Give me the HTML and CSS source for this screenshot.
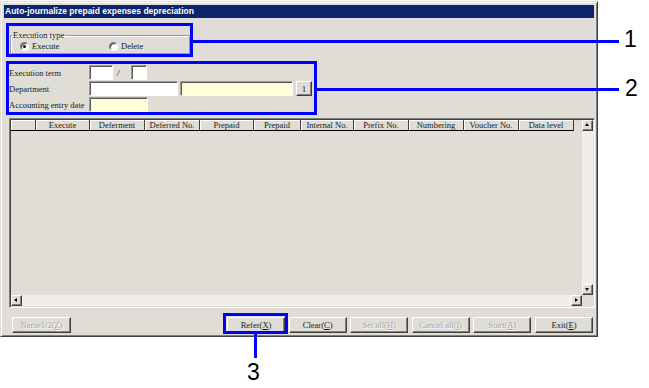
FILE: index.html
```html
<!DOCTYPE html>
<html>
<head>
    <meta charset="UTF-8">
    <title>Auto-journalize prepaid expenses depreciation</title>
    <link rel="stylesheet" href="styles.css">
</head>
<body>
    <div class="window">
        <div class="titlebar">Auto-journalize prepaid expenses depreciation</div>
        <div class="client">
            <fieldset class="group">
                <legend>Execution type</legend>
                <label class="opt"><span class="radio on"></span>Execute</label>
                <label class="opt"><span class="radio"></span>Delete</label>
            </fieldset>

            <div class="fields">
                <div class="row">
                    <span class="lbl">Execution term</span>
                    <span class="input w-year"></span>
                    <span class="slash">/</span>
                    <span class="input w-month"></span>
                </div>
                <div class="row">
                    <span class="lbl">Department</span>
                    <span class="input w-code"></span>
                    <span class="input yellow w-name"></span>
                    <button class="btn tiny">1</button>
                </div>
                <div class="row">
                    <span class="lbl">Accounting entry date</span>
                    <span class="input yellow w-date"></span>
                </div>
            </div>

            <div class="list">
                <div class="view">
                    <div class="head">
                        <span class="hc c0"></span>
                        <span class="hc c1">Execute</span>
                        <span class="hc c2">Deferment</span>
                        <span class="hc c2">Deferred No.</span>
                        <span class="hc c1">Prepaid</span>
                        <span class="hc c5">Prepaid</span>
                        <span class="hc c6">Internal No.</span>
                        <span class="hc c2">Prefix No.</span>
                        <span class="hc c2">Numbering</span>
                        <span class="hc c2">Voucher No.</span>
                        <span class="hc c2">Data level</span>
                    </div>
                </div>
                <div class="vscroll">
                    <span class="sbtn up"></span>
                    <span class="track"></span>
                    <span class="sbtn down"></span>
                </div>
                <div class="hscroll">
                    <span class="sbtn left"></span>
                    <span class="track"></span>
                    <span class="sbtn right"></span>
                </div>
                <div class="corner"></div>
            </div>

            <div class="buttons">
                <button class="btn off">Name1/2(<u>Z</u>)</button>
                <span class="spacer"></span>
                <button class="btn">Refer(<u>X</u>)</button>
                <button class="btn">Clear(<u>C</u>)</button>
                <button class="btn off">Set all(<u>H</u>)</button>
                <button class="btn off">Cancel all(<u>I</u>)</button>
                <button class="btn off">Start(<u>A</u>)</button>
                <button class="btn">Exit(<u>E</u>)</button>
            </div>
        </div>
    </div>

    <!-- callouts -->
    <div class="callouts">
        <div class="box b1"></div>
        <div class="line l1"></div>
        <span class="num n1">1</span>
        <div class="box b2"></div>
        <div class="line l2"></div>
        <span class="num n2">2</span>
        <div class="box b3"></div>
        <div class="line l3"></div>
        <span class="num n3">3</span>
    </div>
</body>
</html>
```

FILE: styles.css
```css
* { box-sizing: border-box; }
body {
    margin: 0;
    padding-top: 1px;
    background: #fff;
    font-family: "Liberation Serif", serif;
    font-size: 8.5px;
    color: #1a1a1a;
    position: relative;
    height: 388px;
}

/* window frame */
.window {
    width: 598px;
    background: #dfddd6;
    border: 1px solid;
    border-color: #dfddd6 #404040 #404040 #dfddd6;
    box-shadow: inset 1px 1px #fff, inset -1px -1px #808080;
    padding: 3px;
}
.titlebar {
    height: 13px;
    background: #0c246c;
    color: #fff;
    font: bold 8.5px/13px "Liberation Sans", sans-serif;
    padding-left: 1px;
    white-space: nowrap;
}

/* execution type */
.group {
    margin: 12px 0 0 6px;
    width: 180px;
    min-width: 0;
    padding: 1px 0 2px 9px;
    border: 1px solid #9c9a94;
    box-shadow: 1px 1px #fff, inset 1px 1px #fff;
    display: flex;
}
.group legend {
    padding: 0 1px;
    margin-left: -8px;
    line-height: 10px;
}
.opt {
    display: flex;
    align-items: center;
    gap: 3px;
    width: 89px;
    line-height: 10px;
}
.opt:last-child { width: auto; }
.radio {
    width: 9px; height: 9px;
    border-radius: 50%;
    background: #fff;
    border: 1px solid;
    border-color: #808080 #fff #fff #808080;
    box-shadow: inset 1px 1px #404040;
    position: relative;
}
.radio.on::after {
    content: "";
    position: absolute;
    left: 2px; top: 2px;
    width: 3px; height: 3px;
    border-radius: 50%;
    background: #000;
}

/* input rows */
.fields {
    margin: 11px 0 0 5px;
    display: flex;
    flex-direction: column;
    gap: 1px;
}
.row { display: flex; align-items: center; height: 15px; }
.lbl { width: 80px; white-space: nowrap; }
.input {
    height: 15px;
    background: #fff;
    border: 1px solid;
    border-color: #9c9a94 #fff #fff #9c9a94;
    box-shadow: inset 1px 1px #5a5a5a;
}
.yellow { background: #ffffd6; }
.w-year { width: 24px; }
.slash { width: 18px; padding-left: 4px; font-style: italic; }
.w-month { width: 16px; }
.w-code { width: 89px; margin-right: 2px; }
.w-name { width: 113px; margin-right: 3px; }
.w-date { width: 59px; }

/* list view */
.list {
    margin: 6px 0 0 5px;
    width: 586px;
    height: 190px;
    border: 1px solid;
    border-color: #808080 #fff #fff #808080;
    box-shadow: inset 1px 1px #404040, inset -1px -1px #dfddd6;
    padding: 1px;
    display: grid;
    grid-template-columns: 1fr 11px;
    grid-template-rows: 1fr 11px;
}
.view { overflow: hidden; }
.head { display: flex; height: 11px; }
.hc {
    flex: none;
    border-right: 1px solid #404040;
    border-bottom: 1px solid #000;
    box-shadow: inset 1px 1px #fff;
    text-align: center;
    line-height: 10px;
    white-space: nowrap;
}
.c0 { width: 25px; }
.c1 { width: 54px; }
.c2 { width: 55px; }
.c5 { width: 47px; }
.c6 { width: 53px; }

.vscroll, .hscroll { display: flex; }
.vscroll { flex-direction: column; }
.track { flex: 1; background: #efeee9; }
.corner { background: #dfddd6; }
.sbtn {
    flex: none;
    width: 11px; height: 11px;
    background: #dfddd6;
    border: 1px solid;
    border-color: #fff #404040 #404040 #fff;
    box-shadow: inset -1px -1px #808080;
    position: relative;
}
.sbtn::after {
    content: "";
    position: absolute;
    width: 0; height: 0;
    border: 2px solid transparent;
}
.up::after { left: 2px; top: 2px; border-bottom: 3px solid #000; border-top: 0; }
.down::after { left: 2px; top: 3px; border-top: 3px solid #000; border-bottom: 0; }
.left::after { left: 2px; top: 2px; border-right: 3px solid #000; border-left: 0; }
.right::after { left: 3px; top: 2px; border-left: 3px solid #000; border-right: 0; }

/* bottom buttons */
.buttons {
    display: flex;
    gap: 3.6px;
    margin: 9px 1px 0 8px;
    height: 16px;
}
.spacer { flex: 1; }
.btn {
    width: 58px;
    height: 16px;
    padding: 0;
    font: 8.5px "Liberation Serif", serif;
    color: #1a1a1a;
    background: #dfddd6;
    border: 1px solid;
    border-color: #fff #404040 #404040 #fff;
    box-shadow: inset -1px -1px #808080;
    white-space: nowrap;
}
.btn.off { color: #a8a69f; text-shadow: 1px 1px #fff; }
.buttons .btn:first-child { width: 59px; }
.btn.tiny { width: 16px; height: 15px; font-size: 9px; }

/* callouts */
.callouts { position: absolute; inset: 0; pointer-events: none; }
.box { position: absolute; border: 3px solid #0000ff; }
.b1 { left: 6px; top: 23px; width: 187px; height: 34px; }
.b2 { left: 6px; top: 61px; width: 311px; height: 54px; }
.b3 { left: 223px; top: 313px; width: 65px; height: 21px; }
.line { position: absolute; background: #0000ff; }
.l1 { left: 193px; top: 40px; width: 426px; height: 3px; }
.l2 { left: 317px; top: 88px; width: 302px; height: 3px; }
.l3 { left: 254px; top: 334px; width: 3px; height: 24px; }
.num {
    position: absolute;
    font: 23px/1 "Liberation Sans", sans-serif;
    color: #000;
}
.n1 { left: 624px; top: 28px; }
.n2 { left: 625px; top: 77px; }
.n3 { left: 247px; top: 361px; }
```
